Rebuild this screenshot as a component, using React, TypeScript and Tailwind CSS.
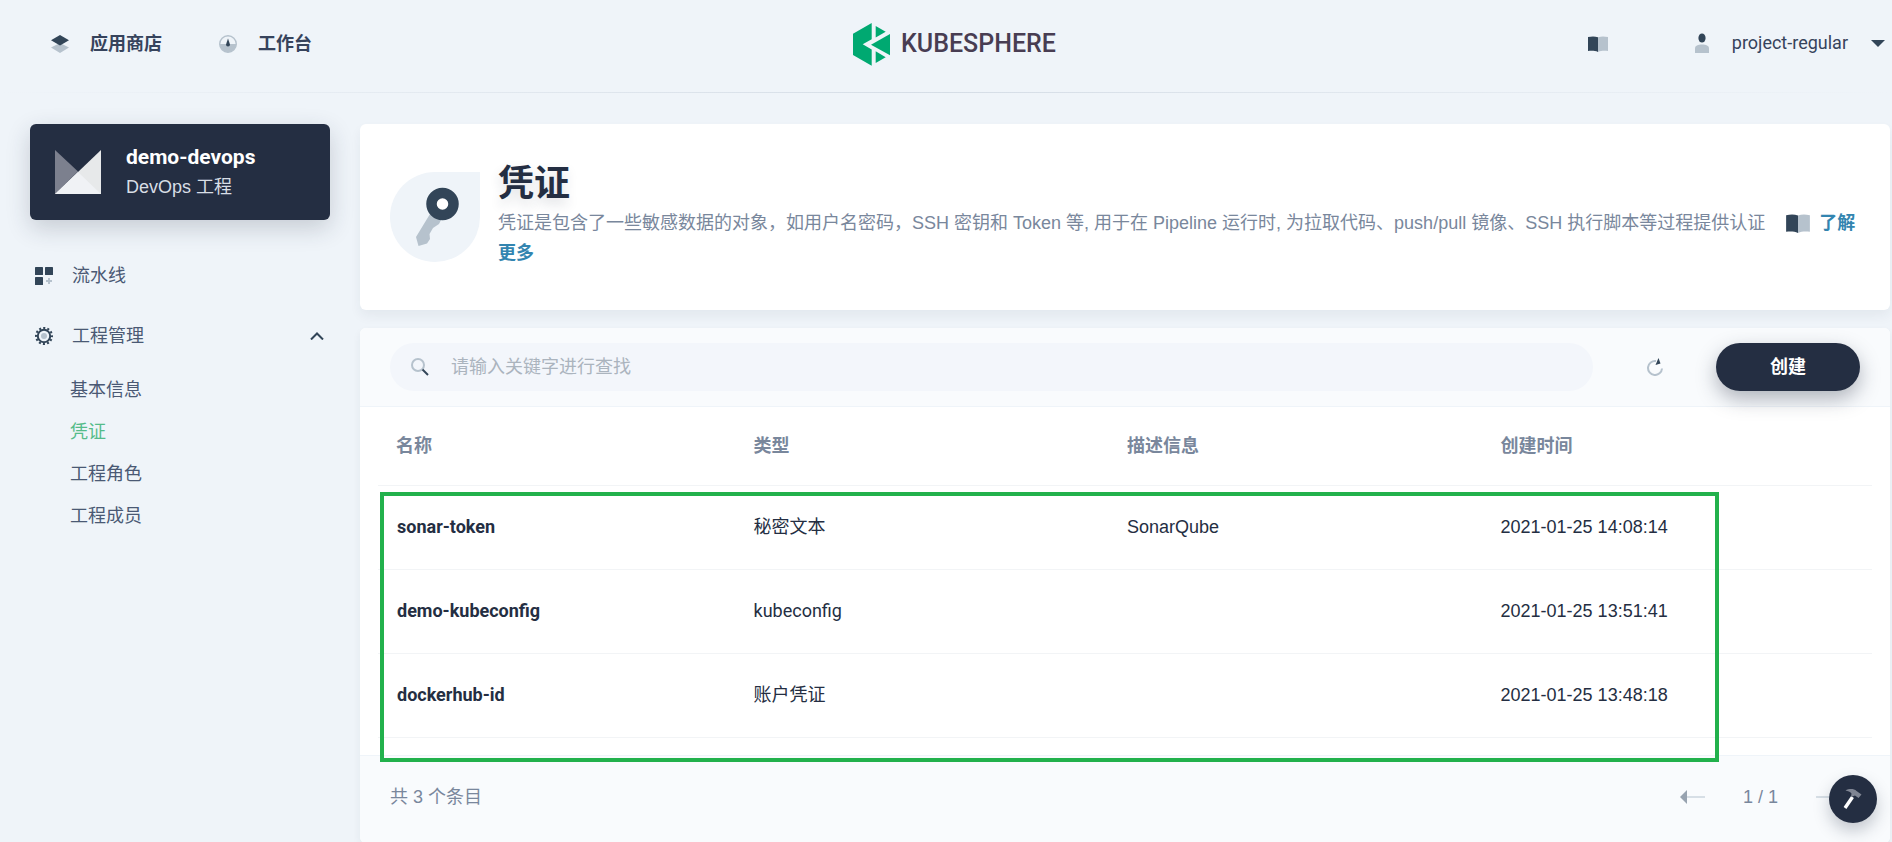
import React from "react";

const rows = [
  { name: "sonar-token", type: "秘密文本", desc: "SonarQube", time: "2021-01-25 14:08:14" },
  { name: "demo-kubeconfig", type: "kubeconfig", desc: "", time: "2021-01-25 13:51:41" },
  { name: "dockerhub-id", type: "账户凭证", desc: "", time: "2021-01-25 13:48:18" },
];

const subItems = ["基本信息", "凭证", "工程角色", "工程成员"];

function BookIcon({ className }: { className: string }) {
  return (
    <svg viewBox="0 0 20 16" className={className} aria-hidden="true">
      <path d="M0 1C4 .2 7 .2 10 1.300V16C7 14.700 4 14.700 0 15Z" fill="#324558" />
      <path d="M20 1C16 .2 13 .2 10 1.300V16C13 14.700 16 14.700 20 15Z" fill="#b6c2cd" />
    </svg>
  );
}

function Header() {
  return (
    <header>
      <div className="grid h-[92px] grid-cols-[1fr_auto_1fr] items-center pr-[7px] pl-6">
        <nav className="flex items-center gap-[57px] pb-1 pl-[27px] text-lg font-bold text-[#36435c]">
          <a href="#store" className="flex items-center gap-[21px]">
            <svg viewBox="0 0 18 18" className="size-[18px]" aria-hidden="true">
              <path d="M0 12.500 9 8l9 4.500L9 18Z" fill="#b6c2cd" />
              <path d="M0 5.200 9 0l9 5.200-9 5.200Z" fill="#324558" />
            </svg>
            应用商店
          </a>
          <a href="#workbench" className="flex items-center gap-[21px]">
            <svg viewBox="0 0 18 18" className="size-[18px]" aria-hidden="true">
              <circle cx="9" cy="9" r="8.300" fill="#eff4f9" stroke="#b6c2cd" strokeWidth="1.400" />
              <path d="M.7 9h16.600a8.300 8.300 0 0 1-16.600 0Z" fill="#b6c2cd" />
              <path d="M9 3.500 7 9.500a2 2 0 1 0 4 0Z" fill="#324558" />
            </svg>
            工作台
          </a>
        </nav>
        <a href="#home" className="flex items-center gap-[11px] pb-1 text-[25px] text-[#483d52]">
          <svg viewBox="0 0 37 43" className="h-[43px] w-[37px]" aria-hidden="true">
            <g fill="#00a971">
              <path d="M18.700 0V16.200L9.700 21.300l9 5.200V42.700L0 32V10.700Z" />
              <path d="M22.700 3 32.700 8.700 22.700 14.500Z" />
              <path d="M37 11V32.300L18 21.700Z" />
              <path d="M22.700 28.300 32.700 34.200 22.700 40Z" />
            </g>
          </svg>
          <span className="font-medium">KUBESPHERE</span>
        </a>
        <div className="flex items-center justify-end pb-1">
          <a href="#docs" aria-label="文档">
            <BookIcon className="h-4 w-5" />
          </a>
          <button type="button" className="ml-[87px] flex items-center pb-0.5 text-lg text-[#36435c]">
            <svg viewBox="0 0 14 20" className="h-5 w-3.5" aria-hidden="true">
              <ellipse cx="7" cy="5" rx="3.600" ry="4.600" fill="#324558" />
              <path d="M0 20V15.500C0 12.500 3 11.500 7 11.500S14 12.500 14 15.500V20Z" fill="#b6c2cd" />
            </svg>
            <span className="ml-[23px]">project-regular</span>
            <svg viewBox="0 0 14 7" className="ml-[23px] h-[7px] w-3.5" aria-hidden="true">
              <path d="M0 0H14L7 7Z" fill="#324558" />
            </svg>
          </button>
        </div>
      </div>
      <div className="h-px bg-linear-to-r from-[#eff4f9] via-[#d5dde6] to-[#eff4f9]" />
    </header>
  );
}

function Sidebar() {
  return (
    <aside className="w-[300px] shrink-0">
      <button
        type="button"
        className="flex h-24 w-full items-center gap-[25px] rounded-md bg-[#242e42] px-[25px] text-left shadow-[0_8px_24px_rgba(36,46,66,0.2)]"
      >
        <svg viewBox="0 0 46 44" className="h-11 w-[46px]" aria-hidden="true">
          <path d="M0 0 23 21.500 0 44Z" fill="#7c808e" />
          <path d="M46 0V44H0Z" fill="#e7e9ea" />
          <path d="M0 44 23 22 46 44Z" fill="#f0f2f5" />
        </svg>
        <span className="flex flex-col">
          <span className="text-[21px] leading-[30px] font-bold text-white">demo-devops</span>
          <span className="font-['Liberation_Sans','Noto_Sans_CJK_SC',sans-serif] text-lg leading-[30px] text-[#d8dee5]">
            DevOps 工程
          </span>
        </span>
      </button>
      <nav className="mt-[26px] text-lg text-[#4a5974]">
        <a href="#pipelines" className="flex h-[60px] items-center gap-[19px] pl-[5px]">
          <svg viewBox="0 0 18 18" className="size-[18px]" aria-hidden="true">
            <g fill="#324558">
              <rect width="8" height="8" rx=".6" />
              <rect x="10" width="8" height="8" rx=".6" />
              <rect y="10" width="8" height="8" rx=".6" />
            </g>
            <path d="M14 11v6M11 14h6" stroke="#b6c2cd" strokeWidth="2" />
          </svg>
          流水线
        </a>
        <button type="button" className="flex h-[60px] w-full items-center gap-[19px] pr-1.5 pl-[5px]">
          <svg viewBox="0 0 18 18" className="size-[18px]" aria-hidden="true">
            <circle cx="9" cy="9" r="8" fill="none" stroke="#324558" strokeWidth="2" strokeDasharray="2.090 2.099" strokeDashoffset="1.045" />
            <circle cx="9" cy="9" r="6.200" fill="none" stroke="#324558" strokeWidth="2" />
            <circle cx="9" cy="9" r="3" fill="#b6c2cd" />
          </svg>
          工程管理
          <svg viewBox="0 0 14 8" className="ml-auto h-2 w-3.5" aria-hidden="true">
            <path d="M1 7.500 7 1.500l6 6" fill="none" stroke="#324558" strokeWidth="2" />
          </svg>
        </button>
        <ul className="pt-[3px]">
          {subItems.map((item) => (
            <li key={item}>
              <a
                href={`#${item}`}
                className={`flex h-[42px] items-center pl-10 ${item === "凭证" ? "text-[#55bc8a]" : ""}`}
              >
                {item}
              </a>
            </li>
          ))}
        </ul>
      </nav>
    </aside>
  );
}

function Banner() {
  return (
    <section className="flex gap-[18px] rounded-md bg-white px-[30px] pt-9 pb-[42px] shadow-[0_6px_12px_rgba(36,46,66,0.06)]">
      <div className="mt-3 flex size-[90px] shrink-0 items-center justify-center rounded-full rounded-tr-none bg-[#eff4f9]">
        <svg viewBox="0 0 90 90" className="size-[90px]" aria-hidden="true">
          <path d="M40 42 26 65 28.500 74 37 71.500 40 67 39.500 62 43 56 49 52 52 46Z" fill="#b6c2cd" />
          <circle cx="52.500" cy="32" r="11" fill="#fff" stroke="#324558" strokeWidth="10.500" />
        </svg>
      </div>
      <div className="min-w-0">
        <h1 className="text-4xl leading-[48px] font-bold text-[#242e42] [text-shadow:0_6px_12px_rgba(36,46,66,0.15)]">凭证</h1>
        <p className="font-['Liberation_Sans','Noto_Sans_CJK_SC',sans-serif] text-lg leading-[30px] text-[#79879c]">
          凭证是包含了一些敏感数据的对象，如用户名密码，SSH 密钥和 Token 等, 用于在 Pipeline 运行时, 为拉取代码、push/pull 镜像、SSH 执行脚本等过程提供认证
          <BookIcon className="mr-2 ml-5 inline-block h-[19px] w-[26px] align-[-4px]" />
          <a href="#more" className="font-bold text-[#3385b0]">了解更多</a>
        </p>
      </div>
    </section>
  );
}

function Toolbar() {
  return (
    <div className="flex items-center rounded-t-md border-b border-[#eff4f9] bg-[#f9fbfd] px-[30px] py-[15px]">
      <label className="flex h-12 grow items-center gap-[22px] rounded-full bg-[#f3f6fb] pl-[21px]">
        <svg viewBox="0 0 18 18" className="size-[18px]" aria-hidden="true">
          <circle cx="7" cy="7" r="6" fill="none" stroke="#b6c2cd" strokeWidth="2" />
          <path d="m11.500 11.500 5.500 5.500" stroke="#324558" strokeWidth="2" />
        </svg>
        <input
          type="text"
          aria-label="搜索"
          placeholder="请输入关键字进行查找"
          className="grow bg-transparent text-lg text-[#242e42] outline-none placeholder:text-[#abb4be]"
        />
      </label>
      <button type="button" aria-label="刷新" className="ml-[53px]">
        <svg viewBox="0 0 18 18" className="size-[18px]" aria-hidden="true">
          <path d="M10 3.100A7 7 0 1 0 16 10.500" fill="none" stroke="#b6c2cd" strokeWidth="2" />
          <path d="M12.500 0 14.500 5.500 9.500 7Z" fill="#324558" />
        </svg>
      </button>
      <button
        type="button"
        className="ml-[52px] h-12 w-36 rounded-full bg-[#242e42] text-lg font-bold text-white shadow-[0_8px_20px_rgba(36,46,66,0.35)]"
      >
        创建
      </button>
    </div>
  );
}

function CredentialTable() {
  return (
    <div className="relative px-[18px] pb-[17px]">
      <table className="w-full table-fixed text-left text-lg">
        <thead>
          <tr className="h-[78px] border-b border-[#f2f4f6] text-[#79879c]">
            <th className="w-[24%] px-[18px] font-bold">名称</th>
            <th className="w-1/4 px-[17px] font-bold">类型</th>
            <th className="w-1/4 px-[17px] font-bold">描述信息</th>
            <th className="w-[26%] px-[17px] font-bold">创建时间</th>
          </tr>
        </thead>
        <tbody>
          {rows.map((row) => (
            <tr key={row.name} className="h-[84px] border-b border-[#f2f4f6] text-[#242e42]">
              <td className="px-[19px]">
                <a href={`#${row.name}`} className="font-bold">{row.name}</a>
              </td>
              <td className="px-[17px]">{row.type}</td>
              <td className="px-[17px] font-['Liberation_Sans',sans-serif]">{row.desc}</td>
              <td className="px-[17px] font-['Liberation_Sans',sans-serif]">{row.time}</td>
            </tr>
          ))}
        </tbody>
      </table>
      <div className="pointer-events-none absolute top-[85px] right-[171px] -bottom-[7px] left-5 border-4 border-[#22b14c]" />
    </div>
  );
}

function Pagination() {
  return (
    <footer className="flex h-[88px] items-center justify-between rounded-b-md border-t border-[#eff4f9] bg-[#f9fbfd] pr-[49px] pb-1 pl-[30px] font-['Liberation_Sans','Noto_Sans_CJK_SC',sans-serif] text-lg text-[#79879c]">
      <span>共 3 个条目</span>
      <div className="flex items-center gap-[38px]">
        <button type="button" aria-label="上一页">
          <svg viewBox="0 0 25 14" className="h-3.5 w-[25px]" aria-hidden="true">
            <path d="M7 7H25" stroke="#d7dfe6" strokeWidth="2" />
            <path d="M7 0V14L0 7Z" fill="#98a3b0" />
          </svg>
        </button>
        <span>1 / 1</span>
        <button type="button" aria-label="下一页">
          <svg viewBox="0 0 25 14" className="h-3.5 w-[25px]" aria-hidden="true">
            <path d="M0 7H18" stroke="#d7dfe6" strokeWidth="2" />
            <path d="M18 0V14L25 7Z" fill="#98a3b0" />
          </svg>
        </button>
      </div>
    </footer>
  );
}

export default function App() {
  return (
    <div className="min-h-screen bg-[#eff4f9] font-[Roboto,'Noto_Sans_CJK_SC',sans-serif]">
      <Header />
      <div className="flex gap-[30px] pt-[31px] pr-0.5 pl-[30px]">
        <Sidebar />
        <main className="flex min-w-0 grow flex-col gap-[18px]">
          <Banner />
          <section className="rounded-md bg-white shadow-[0_4px_8px_rgba(36,46,66,0.06)]">
            <Toolbar />
            <CredentialTable />
            <Pagination />
          </section>
        </main>
      </div>
      <button
        type="button"
        aria-label="工具箱"
        className="fixed right-[15px] bottom-[19px] flex size-12 items-center justify-center rounded-full bg-[#242e42] shadow-[0_8px_16px_rgba(36,46,66,0.25)]"
      >
        <svg viewBox="0 0 20 20" className="size-5" aria-hidden="true">
          <path d="M9.500 8 2 19" stroke="#fff" strokeWidth="3.400" />
          <path d="M2.500 1.500C6 -.5 11 -.5 13.500 2L18.500 5.500 15.500 9 12 6.500 8 8 8.500 4.500C7 2.500 5 2 2.500 1.500Z" fill="#7f8593" />
        </svg>
      </button>
    </div>
  );
}
